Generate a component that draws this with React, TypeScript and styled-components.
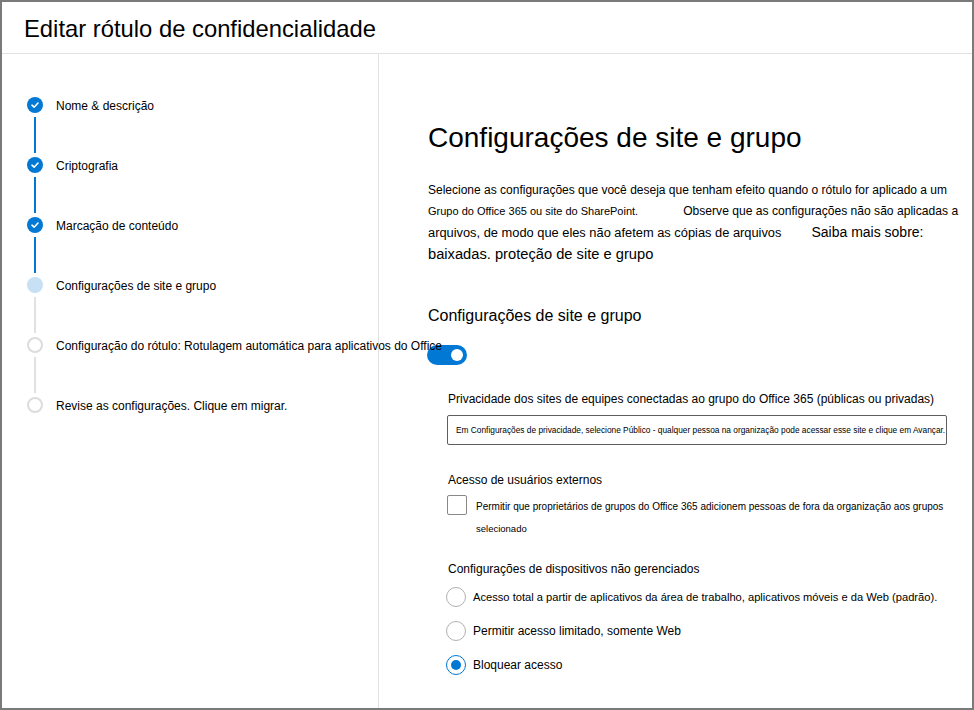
import React from "react";
import styled, { createGlobalStyle } from "styled-components";

const GlobalStyle = createGlobalStyle`
  html, body { margin: 0; padding: 0; background: #fff; }
  * { box-sizing: border-box; }
`;

const BLUE = "#0078d4";

const Frame = styled.div`
  width: 974px;
  height: 710px;
  border: 2px solid #7a7a7a;
  display: flex;
  flex-direction: column;
  background: #fff;
  overflow: hidden;
  font-family: "Liberation Sans", Arial, sans-serif;
  color: #000;
`;

const Header = styled.header`
  height: 52px;
  flex: none;
  border-bottom: 1px solid #e1e1e1;
  padding: 13px 0 0 22px;
`;

const Title = styled.h1`
  margin: 0;
  font-size: 23.8px;
  line-height: 28px;
  font-weight: 400;
`;

const Body = styled.div`
  flex: 1;
  display: grid;
  grid-template-columns: 377px 1fr;
  min-height: 0;
`;

const Nav = styled.nav`
  position: relative;
  z-index: 1;
  border-right: 1px solid #e1e1e1;
  padding: 43px 0 0 25px;
  display: flex;
  flex-direction: column;
`;

const Step = styled.div`
  display: flex;
  gap: 13px;
  height: 60px;
`;

const Indicator = styled.div`
  width: 16px;
  display: flex;
  flex-direction: column;
  align-items: center;
  flex: none;
`;

type StepState = "done" | "current" | "todo";

const Dot = styled.div<{ $state: StepState }>`
  width: 16px;
  height: 16px;
  border-radius: 50%;
  flex: none;
  display: flex;
  align-items: center;
  justify-content: center;
  background: ${(p) =>
    p.$state === "done" ? BLUE : p.$state === "current" ? "#c7e0f4" : "#fff"};
  border: ${(p) => (p.$state === "todo" ? "2px solid #dcdcdc" : "none")};
`;

const Connector = styled.div<{ $done: boolean }>`
  width: 2px;
  height: 36px;
  margin-top: 4px;
  background: ${(p) => (p.$done ? BLUE : "#e1e1e1")};
`;

const StepLabel = styled.span`
  padding-top: 1px;
  font-size: 12px;
  line-height: 16px;
  white-space: nowrap;
`;

const Main = styled.main`
  padding: 67px 0 0 49px;
  display: flex;
  flex-direction: column;
`;

const PageTitle = styled.h2`
  margin: 0;
  font-size: 28px;
  line-height: 34px;
  font-weight: 400;
`;

const Desc = styled.div`
  margin-top: 25px;
  display: flex;
  flex-direction: column;
`;

const DescLine = styled.div<{ $h: number }>`
  height: ${(p) => p.$h}px;
  display: flex;
  align-items: center;
  white-space: nowrap;
`;

const Seg = styled.span<{ $size: number; $gap?: number }>`
  font-size: ${(p) => p.$size}px;
  margin-left: ${(p) => p.$gap ?? 0}px;
`;

const SubTitle = styled.h3`
  margin: 41px 0 0;
  font-size: 16px;
  line-height: 20px;
  font-weight: 400;
`;

const Toggle = styled.div`
  margin-top: 19px;
  margin-left: -1px;
  width: 40px;
  height: 20px;
  border-radius: 10px;
  background: ${BLUE};
  display: flex;
  align-items: center;
  justify-content: flex-end;
  padding-right: 4px;
`;

const Knob = styled.div`
  width: 12px;
  height: 12px;
  border-radius: 50%;
  background: #fff;
`;

const Section = styled.div`
  padding-left: 19px;
  display: flex;
  flex-direction: column;
`;

const FieldLabel = styled.div<{ $mt: number }>`
  margin-top: ${(p) => p.$mt}px;
  padding-left: 1px;
  font-size: 12px;
  line-height: 16px;
  white-space: nowrap;
`;

const InfoBox = styled.div`
  margin-top: 8px;
  width: 500px;
  height: 30px;
  border: 1px solid #605e5c;
  border-radius: 2px;
  display: flex;
  align-items: center;
  padding-left: 8px;
  font-size: 8.33px;
  white-space: nowrap;
  overflow: hidden;
`;

const CheckRow = styled.div`
  margin-top: 7px;
  display: flex;
  gap: 9px;
  align-items: flex-start;
`;

const CheckBox = styled.div`
  width: 20px;
  height: 20px;
  border: 1px solid #8a8886;
  border-radius: 2px;
  flex: none;
`;

const CheckText = styled.div`
  margin-top: 1px;
  display: flex;
  flex-direction: column;
`;

const CheckLine = styled.div<{ $size: number }>`
  font-size: ${(p) => p.$size}px;
  line-height: 22px;
  white-space: nowrap;
`;

const RadioGroup = styled.div`
  margin-top: 10px;
  margin-left: -1px;
  display: flex;
  flex-direction: column;
  gap: 14px;
`;

const RadioRow = styled.div`
  display: flex;
  align-items: center;
  gap: 7px;
  height: 20px;
`;

const Radio = styled.div<{ $on?: boolean }>`
  width: 20px;
  height: 20px;
  border-radius: 50%;
  flex: none;
  border: 1px solid ${(p) => (p.$on ? BLUE : "#b3b0ad")};
  display: flex;
  align-items: center;
  justify-content: center;
`;

const RadioDot = styled.div`
  width: 10px;
  height: 10px;
  border-radius: 50%;
  background: ${BLUE};
`;

const RadioText = styled.span<{ $size: number }>`
  font-size: ${(p) => p.$size}px;
  white-space: nowrap;
`;

const Check = () => (
  <svg width="10" height="10" viewBox="0 0 10 10">
    <path d="M2 5.2 L4.1 7.2 L8 3" fill="none" stroke="#fff" strokeWidth="1.6" strokeLinecap="round" strokeLinejoin="round" />
  </svg>
);

const steps: { label: string; state: StepState }[] = [
  { label: "Nome & descrição", state: "done" },
  { label: "Criptografia", state: "done" },
  { label: "Marcação de conteúdo", state: "done" },
  { label: "Configurações de site e grupo", state: "current" },
  { label: "Configuração do rótulo: Rotulagem automática para aplicativos do Office", state: "todo" },
  { label: "Revise as configurações. Clique em migrar.", state: "todo" },
];

export default function App() {
  return (
    <>
      <GlobalStyle />
      <Frame>
        <Header>
          <Title>Editar rótulo de confidencialidade</Title>
        </Header>
        <Body>
          <Nav>
            {steps.map((s, i) => (
              <Step key={s.label}>
                <Indicator>
                  <Dot $state={s.state}>{s.state === "done" && <Check />}</Dot>
                  {i < steps.length - 1 && <Connector $done={s.state === "done"} />}
                </Indicator>
                <StepLabel>{s.label}</StepLabel>
              </Step>
            ))}
          </Nav>
          <Main>
            <PageTitle>Configurações de site e grupo</PageTitle>
            <Desc>
              <DescLine $h={20}>
                <Seg $size={12}>
                  Selecione as configurações que você deseja que tenham efeito quando o rótulo for aplicado a um
                </Seg>
              </DescLine>
              <DescLine $h={21}>
                <Seg $size={11}>Grupo do Office 365 ou site do SharePoint.</Seg>
                <Seg $size={12.1} $gap={45}>
                  Observe que as configurações não são aplicadas a
                </Seg>
              </DescLine>
              <DescLine $h={22}>
                <Seg $size={12.85}>arquivos, de modo que eles não afetem as cópias de arquivos</Seg>
                <Seg $size={14} $gap={30}>Saiba mais sobre:</Seg>
              </DescLine>
              <DescLine $h={22}>
                <Seg $size={14.7}>baixadas. proteção de site e grupo</Seg>
              </DescLine>
            </Desc>
            <SubTitle>Configurações de site e grupo</SubTitle>
            <Toggle>
              <Knob />
            </Toggle>
            <Section>
              <FieldLabel $mt={26}>
                Privacidade dos sites de equipes conectadas ao grupo do Office 365 (públicas ou privadas)
              </FieldLabel>
              <InfoBox>
                Em Configurações de privacidade, selecione Público - qualquer pessoa na organização pode acessar esse site e clique em Avançar.
              </InfoBox>
              <FieldLabel $mt={27}>Acesso de usuários externos</FieldLabel>
              <CheckRow>
                <CheckBox />
                <CheckText>
                  <CheckLine $size={10}>
                    Permitir que proprietários de grupos do Office 365 adicionem pessoas de fora da organização aos grupos
                  </CheckLine>
                  <CheckLine $size={9.5}>selecionado</CheckLine>
                </CheckText>
              </CheckRow>
              <FieldLabel $mt={21}>Configurações de dispositivos não gerenciados</FieldLabel>
              <RadioGroup>
                <RadioRow>
                  <Radio />
                  <RadioText $size={11.15}>
                    Acesso total a partir de aplicativos da área de trabalho, aplicativos móveis e da Web (padrão).
                  </RadioText>
                </RadioRow>
                <RadioRow>
                  <Radio />
                  <RadioText $size={12}>Permitir acesso limitado, somente Web</RadioText>
                </RadioRow>
                <RadioRow>
                  <Radio $on>
                    <RadioDot />
                  </Radio>
                  <RadioText $size={12}>Bloquear acesso</RadioText>
                </RadioRow>
              </RadioGroup>
            </Section>
          </Main>
        </Body>
      </Frame>
    </>
  );
}
